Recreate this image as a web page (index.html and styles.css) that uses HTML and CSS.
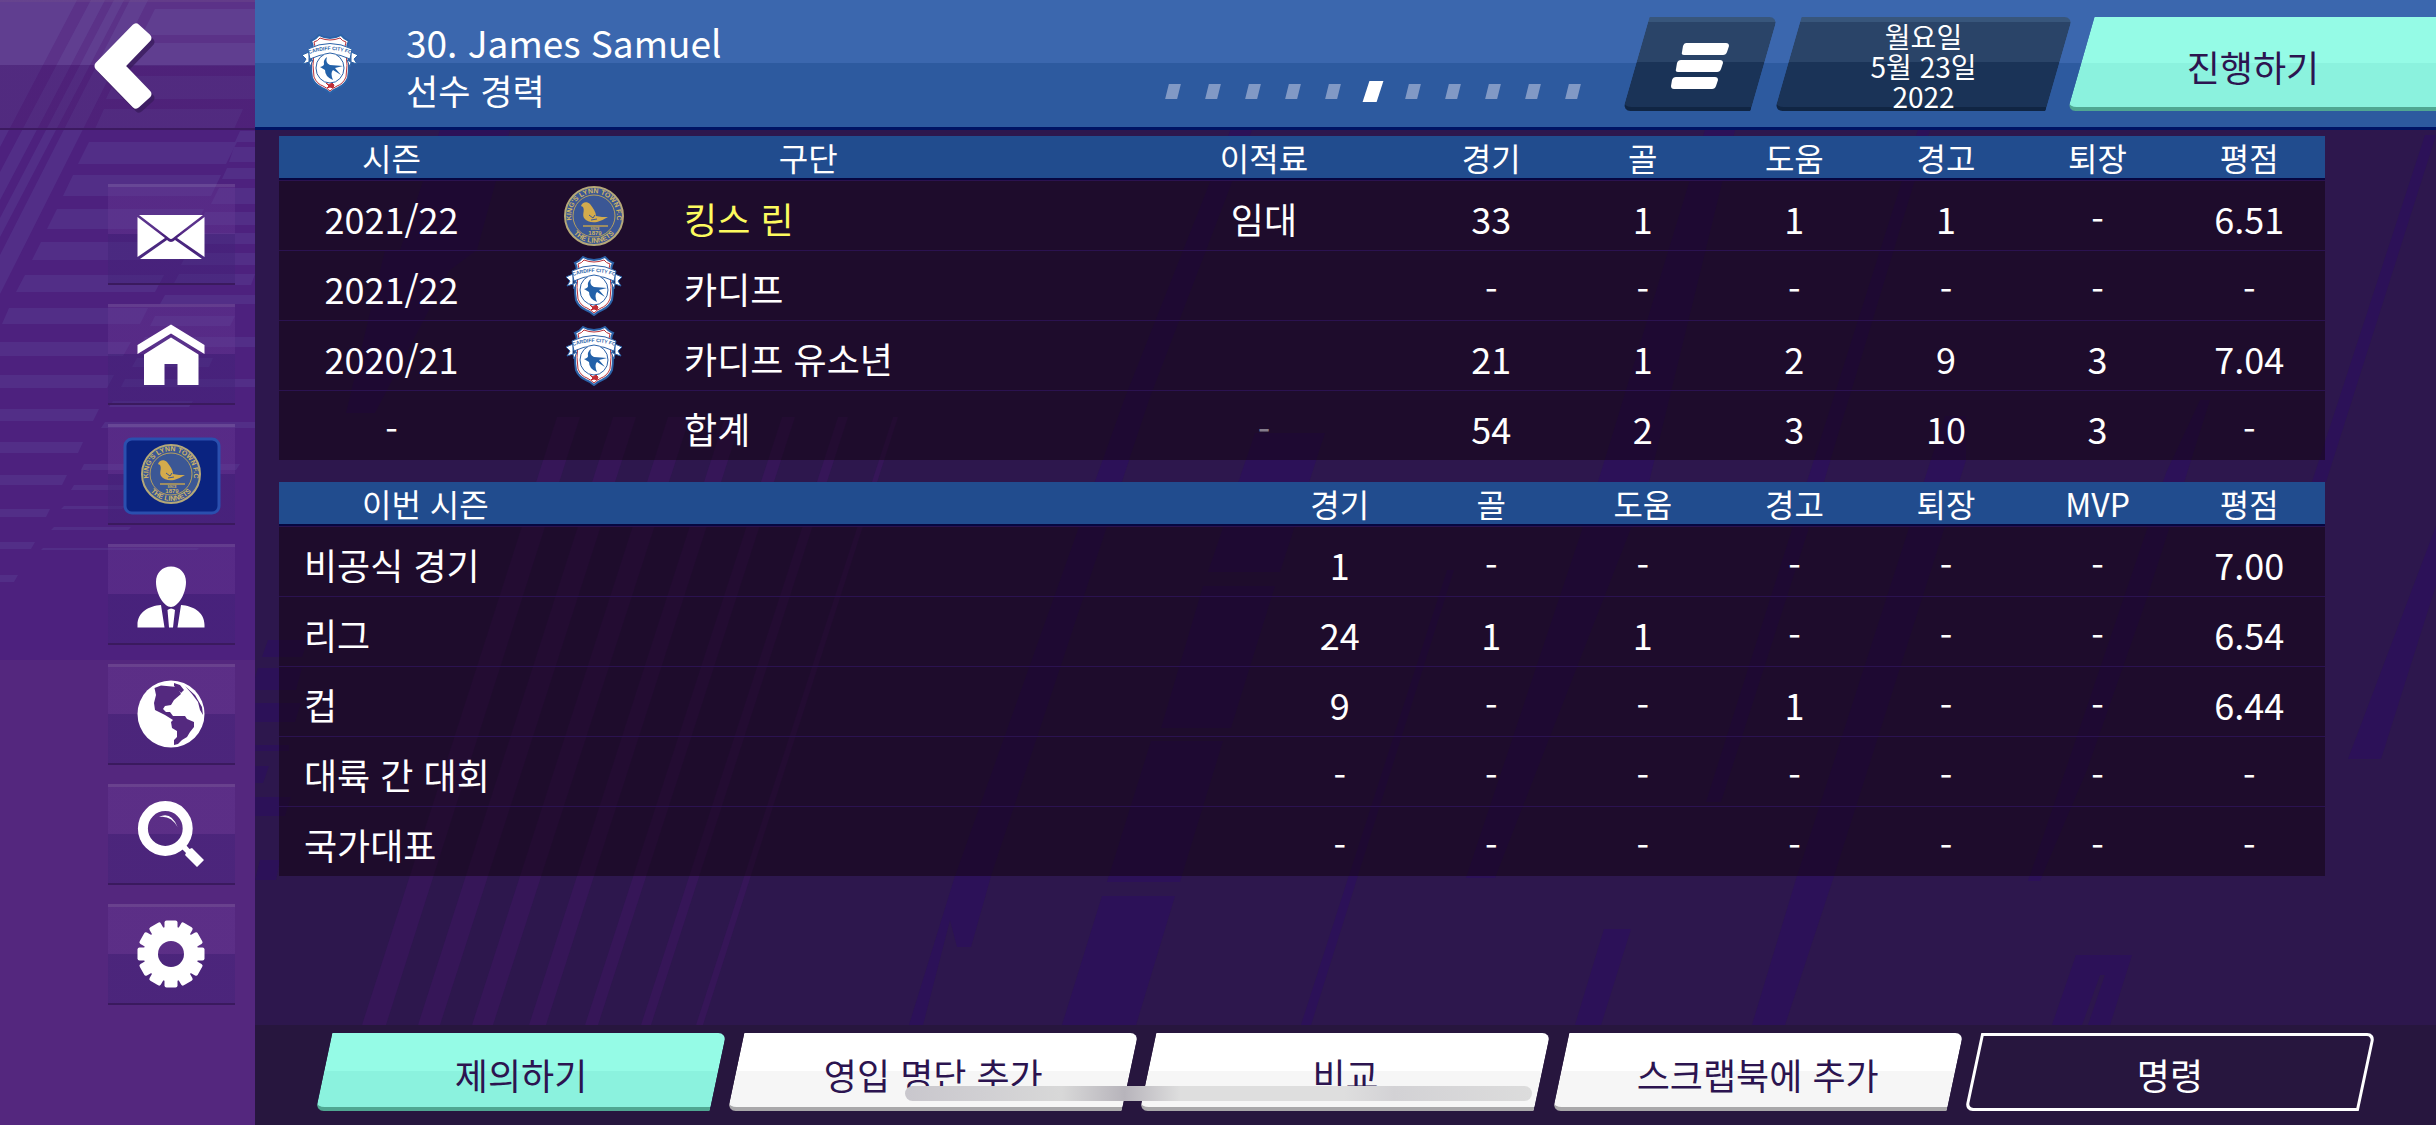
FILE: index.html
```html
<!DOCTYPE html>
<html lang="ko">
<head>
<meta charset="utf-8">
<meta name="viewport" content="width=device-width, initial-scale=1">
<title>30. James Samuel - 선수 경력</title>
<link rel="stylesheet" href="styles.css">
</head>
<body>
<svg class="sprites" aria-hidden="true">
  <defs>
    <mask id="gear-hole"><rect width="127" height="101" fill="#fff"/><circle cx="63" cy="50" r="13" fill="#000"/></mask>
    <path id="kl-top" d="M8 36A22.800 22.800 0 1 1 52 36"/>
    <path id="kl-bottom" d="M5 40A27 27 0 0 0 55 40"/>
    <path id="cc-arc" d="M9 20Q30 12 51 20"/>
    <symbol id="kings-lynn" viewBox="0 0 60 60">
      <circle cx="30" cy="30" r="29" fill="#3b5795" stroke="#b5a878" stroke-width="2"/>
      <circle cx="30" cy="30" r="21" fill="none" stroke="#b5a060" stroke-width="1"/>
      <path d="M17 20C18 16 23 15 26 18C29 22 32 26 32 30C36 31 40 31 44 31C40 33 37 35 33 36C28 37 23 36 20 32C18 28 21 25 19 21Z" fill="#d3ab4c"/>
      <path d="M25 29L29 32L31 29M27 34L33 33" stroke="#3b5795" stroke-width="1" fill="none"/>
      <path d="M19 40H44" stroke="#c0a052" stroke-width="1.5"/>
      <g fill="#cdb467" font-family="Liberation Sans, Arial, sans-serif" font-weight="700">
        <text font-size="7"><textPath href="#kl-top" startOffset="50%" text-anchor="middle">KING'S LYNN TOWN F.C</textPath></text>
        <text font-size="7"><textPath href="#kl-bottom" startOffset="50%" text-anchor="middle">THE LINNETS</textPath></text>
        <text x="31" y="44" font-size="3" text-anchor="middle">SINCE</text>
        <text x="31" y="49" font-size="6" text-anchor="middle">1879</text>
      </g>
    </symbol>
    <symbol id="cardiff" viewBox="0 0 60 60">
      <path d="M19 1Q24 4 30 4Q36 4 41 1Q44 5 49 7Q46 12 48 18Q50 32 48 44Q45 51 38 54Q33 56 30 59Q27 56 22 54Q15 51 12 44Q10 32 12 18Q14 12 11 7Q16 5 19 1Z" fill="#fff" stroke="#2b62a8" stroke-width="2"/>
      <path d="M20 4Q25 6 30 6Q35 6 40 4Q42 7 46 8Q44 12 46 18Q48 32 46 43Q43 50 37 52Q33 54 30 57Q27 54 23 52Q17 50 14 43Q12 32 14 18Q16 12 14 8Q18 7 20 4Z" fill="none" stroke="#b9343c" stroke-width="1"/>
      <path d="M2 21L9 18V28L13 26L10 33L9 28L3 30L6 25ZM58 21L51 18V28L47 26L50 33L51 28L57 30L54 25Z" fill="#fff" stroke="#2b62a8" stroke-width="1"/>
      <path d="M8 15Q30 4 52 15L50 25Q30 15 10 25Z" fill="#fff" stroke="#2b62a8" stroke-width="1"/>
      <text font-family="Liberation Sans, Arial, sans-serif" font-size="5" font-weight="700" fill="#2b62a8"><textPath href="#cc-arc" startOffset="50%" text-anchor="middle">CARDIFF CITY FC</textPath></text>
      <ellipse cx="30" cy="34" rx="14" ry="15" fill="#fff" stroke="#2b62a8" stroke-width="1"/>
      <path d="M27 23Q25 29 30 31L43 32L35 34L41 41L33 36Q30 39 33 46Q25 43 25 36L20 33Q24 32 24 30Q23 26 27 23Z" fill="#2361a9"/>
      <path d="M26 49L29 51L32 49L34 51L33 54L30 53L27 54L29 52Z" fill="#c02c34" stroke="#c02c34" stroke-width="1"/>
    </symbol>
  </defs>
</svg>

<svg class="backdrop" viewBox="0 0 2436 1125" preserveAspectRatio="xMinYMin slice" aria-hidden="true">
  <g fill="#361658">
    <path d="M362 1025h24L580 417h-23ZM418 1025h22L636 417h-23ZM472 1025h21L690 417h-22ZM529 1025h17L742 417h-17ZM585 1025h13L795 417h-13ZM641 1025h10L848 417h-10ZM696 1025h7L898 417h-5Z"/>
  </g>
  <g fill="#2c1158">
    <path d="M1062 1025h74L1175 896h-73ZM1107 882h73L1223 741h-72ZM1161 728h70L1275 586h-72ZM1208 572h72L1325 433h-70Z"/>
    <path d="M909 1025h14L950 920L957 947H971L991 876L1149 400L1290 30H1270L1124 400L955 876Z"/>
    <path d="M1301 1025h10L1454 570h-7Z"/>
    <path d="M1752 1025h33L1834 876L1966 460V416H1945L1797 876Z"/>
    <path d="M1575 1025h26L1631 929h-27Z"/>
    <path d="M2052 1025h30L2100 975H2105L2088 1025h22L2132 955h-56Z"/>
    <path d="M2348 759h33L2436 585V526Z"/>
    <path d="M1466 878h29L1649 482L1735 130H1705L1598 482Z"/>
    <path d="M1706 802h15L1825 478L1930 130H1918Z"/>
    <path d="M2028 881h12L2087 770L2145 604L2187 473L2210 400H2200L2166 473Z"/>
    <path d="M2312 482h14L2436 135H2425Z"/>
    <path d="M346 413h29L450 270L477 250L510 130H440L400 250H385Z"/>
    <path d="M268 640h40l-6 17H262ZM258 668h44l-6 22H255v-12ZM255 703h46l-6 19H255ZM255 745h34v6H255ZM255 766h14l-6 17H255ZM255 797h36l-6 19H255ZM260 860h20l-4 20H255Z"/>
  </g>
</svg>

<aside class="sidebar">
  <svg class="sidebar-art" viewBox="0 0 255 660" aria-hidden="true">
    <rect width="255" height="660" fill="#4d217e"/>
    <g fill="#54328a" opacity=".8">
      <path d="M0 0H77L0 147ZM91 0h14L0 200V172ZM114 0h10L0 237V218ZM130 0h18L0 294V255Z"/>
      <path d="M155 9H255V35H142ZM136 43H255V66H125ZM117 76H255V99H106ZM104 109H243L234 129H95Z"/>
      <path d="M89 142H237L226 164H78ZM73 175H221L211 196H63ZM57 209H204L194 229H47ZM41 242H188L179 260H32ZM25 275H164L155 292H16ZM9 308H148L140 324H2ZM0 342H131L123 356H0ZM0 375H114L107 388H0ZM0 409H99L93 421H0ZM0 442H83L78 453H0ZM0 475H67L62 485H0ZM0 509H50L46 517H0ZM0 542H35L31 549H0ZM0 575H18L14 582H0Z"/>
      <path d="M240 131H255V142H235ZM234 147H255V162H229ZM227 168H255V179H222ZM219 188H255V204H211ZM205 212H255V225H199ZM196 233H255V244H191ZM187 253H255V265H181ZM179 274H255L251 285H173ZM165 295H255V304H160ZM155 316H235L230 326H150ZM145 337h110V347H140ZM137 358H213L209 367H132ZM125 379H255V387H121ZM113 401H193L189 407H109ZM105 422H255V428H101ZM84 464H240L236 470H81ZM74 485H130L127 490H71ZM64 506H125L122 509H61ZM54 527H131L128 530H51ZM43 548H199L197 550H41Z"/>
    </g>
  </svg>
  <button class="back" aria-label="뒤로">
    <svg viewBox="0 0 255 127" aria-hidden="true">
      <path d="M99 64L136 26L147 36L120 64L147 92L136 102Z" fill="#3a1c5e" stroke="#3a1c5e" stroke-width="9" stroke-linejoin="round" transform="translate(3 4)" opacity=".8"/>
      <path d="M99 64L136 26L147 36L120 64L147 92L136 102Z" fill="#fff" stroke="#fff" stroke-width="9" stroke-linejoin="round"/>
    </svg>
  </button>
  <nav class="nav" aria-label="주 메뉴">
    <a class="tile" href="#inbox" aria-label="받은 편지함"><svg viewBox="0 0 127 101" fill="#fff"><path d="M31 31H95L65 54Q63 56 61 54ZM29.500 33L57 54L29.500 73ZM96.500 33V73L69 54ZM59 56Q63 60 67 56L94 75H32Z"/></svg></a>
    <a class="tile" href="#home" aria-label="홈"><svg viewBox="0 0 127 101" fill="#fff"><path d="M29.500 41L63 20.500L96.500 41V50L63 29.500L29.500 50ZM36 50.500L63 33.500L90.500 50.500V81H69.500V60H56.500V81H36Z"/></svg></a>
    <a class="tile" href="#club" aria-label="클럽"><svg viewBox="0 0 127 101"><rect x="17" y="15" width="94" height="74" rx="7" fill="#0a2380" stroke="#2a4fae" stroke-width="3"/><use href="#kings-lynn" x="33" y="20" width="60" height="60"/></svg></a>
    <a class="tile" href="#manager" aria-label="감독"><svg viewBox="0 0 127 101" fill="#fff"><path d="M63 22.500C54 22.500 48 29 48 38C48 50 56 63 63 63C70 63 78 50 78 38C78 29 72 22.500 63 22.500ZM29.500 83.500V81C29.500 68 41 62 53 61L56.500 83.500ZM96.500 83.500V81C96.500 68 85 62 73 61L69.500 83.500ZM59.500 66Q63 63 67 66L65 83.500H61Z"/></svg></a>
    <a class="tile" href="#world" aria-label="세계"><svg viewBox="0 0 127 101"><circle cx="63" cy="50" r="33.500" fill="#fff"/><path d="M46.500 24L53 21.500L69 23L73 30L66 36L63 41L57 42L55 45L58 48H62L65 52H77L79 55L86 58V63L82 68L79 73L74 76L70 80L66 81V76L69 73V67L64 64L63 58L65 56L57 51L47 46L46 39L48 31ZM66 19L72 21L76 26L73 29L69 24L66 22ZM77 22L87 31L94 43L95 51L92 46L90 38L84 30Z" fill="#54297f"/></svg></a>
    <a class="tile" href="#search" aria-label="검색"><svg viewBox="0 0 127 101" fill="#fff"><circle cx="57.300" cy="44.500" r="22.400" fill="none" stroke="#fff" stroke-width="10"/><path d="M51 33Q63 27 69.500 43Q63 31 51 33ZM74 65L78 61L81.500 65L84 64L96 76L89 83L77 71L78 69Z"/></svg></a>
    <a class="tile" href="#settings" aria-label="설정"><svg viewBox="0 0 127 101" fill="#fff"><g mask="url(#gear-hole)"><circle cx="63" cy="50" r="27.500"/><rect x="56.500" y="16.500" width="13" height="67" rx="2"/><rect x="56.500" y="16.500" width="13" height="67" rx="2" transform="rotate(30 63 50)"/><rect x="56.500" y="16.500" width="13" height="67" rx="2" transform="rotate(60 63 50)"/><rect x="56.500" y="16.500" width="13" height="67" rx="2" transform="rotate(90 63 50)"/><rect x="56.500" y="16.500" width="13" height="67" rx="2" transform="rotate(120 63 50)"/><rect x="56.500" y="16.500" width="13" height="67" rx="2" transform="rotate(150 63 50)"/></g></svg></a>
  </nav>
</aside>

<div class="page">
  <header class="topbar">
    <svg class="crest" role="img" aria-label="카디프"><use href="#cardiff"/></svg>
    <div class="titles">
      <h1>30. James Samuel</h1>
      <p>선수 경력</p>
    </div>
    <ol class="pager" aria-label="페이지">
      <li></li><li></li><li></li><li></li><li></li><li class="current" aria-current="page"></li><li></li><li></li><li></li><li></li><li></li>
    </ol>
    <button class="slab dark menu" aria-label="메뉴">
      <svg viewBox="0 0 58 46" fill="#fff" aria-hidden="true"><path d="M15 0H55Q58 0 58 3L56 9Q55 12 52 12H13Q10 12 11 9L12 3Q13 0 15 0ZM10 17H49Q52 17 52 20L50 26Q49 29 46 29H7Q4 29 5 26L6 20Q7 17 10 17ZM5 34H44Q47 34 47 37L45 43Q44 46 41 46H3Q0 46 0 43L1 37Q2 34 5 34Z"/></svg>
    </button>
    <button class="slab dark date"><span>월요일</span><span>5월 23일</span><span>2022</span></button>
    <button class="slab mint continue">진행하기</button>
  </header>

  <main class="content">
    <table class="stats career">
      <colgroup><col class="season"><col class="badge"><col class="club"><col class="fee"><col class="num"><col class="num"><col class="num"><col class="num"><col class="num"><col class="num"></colgroup>
      <thead><tr><th>시즌</th><th colspan="2">구단</th><th>이적료</th><th>경기</th><th>골</th><th>도움</th><th>경고</th><th>퇴장</th><th>평점</th></tr></thead>
      <tbody>
        <tr><td>2021/22</td><td class="badge-cell"><svg class="crest"><use href="#kings-lynn"/></svg></td><td class="label active">킹스 린</td><td>임대</td><td>33</td><td>1</td><td>1</td><td>1</td><td>-</td><td>6.51</td></tr>
        <tr><td>2021/22</td><td class="badge-cell"><svg class="crest"><use href="#cardiff"/></svg></td><td class="label">카디프</td><td></td><td>-</td><td>-</td><td>-</td><td>-</td><td>-</td><td>-</td></tr>
        <tr><td>2020/21</td><td class="badge-cell"><svg class="crest"><use href="#cardiff"/></svg></td><td class="label">카디프 유소년</td><td></td><td>21</td><td>1</td><td>2</td><td>9</td><td>3</td><td>7.04</td></tr>
        <tr><td>-</td><td></td><td class="label">합계</td><td class="muted">-</td><td>54</td><td>2</td><td>3</td><td>10</td><td>3</td><td>-</td></tr>
      </tbody>
    </table>

    <table class="stats current-season">
      <colgroup><col><col class="num"><col class="num"><col class="num"><col class="num"><col class="num"><col class="num"><col class="num"></colgroup>
      <thead><tr><th>이번 시즌</th><th>경기</th><th>골</th><th>도움</th><th>경고</th><th>퇴장</th><th>MVP</th><th>평점</th></tr></thead>
      <tbody>
        <tr><td class="label">비공식 경기</td><td>1</td><td>-</td><td>-</td><td>-</td><td>-</td><td>-</td><td>7.00</td></tr>
        <tr><td class="label">리그</td><td>24</td><td>1</td><td>1</td><td>-</td><td>-</td><td>-</td><td>6.54</td></tr>
        <tr><td class="label">컵</td><td>9</td><td>-</td><td>-</td><td>1</td><td>-</td><td>-</td><td>6.44</td></tr>
        <tr><td class="label">대륙 간 대회</td><td>-</td><td>-</td><td>-</td><td>-</td><td>-</td><td>-</td><td>-</td></tr>
        <tr><td class="label">국가대표</td><td>-</td><td>-</td><td>-</td><td>-</td><td>-</td><td>-</td><td>-</td></tr>
      </tbody>
    </table>
  </main>

  <footer class="actions">
    <button class="slab mint">제의하기</button>
    <button class="slab white">영입 명단 추가</button>
    <button class="slab white">비교</button>
    <button class="slab white">스크랩북에 추가</button>
    <button class="slab outline">명령</button>
  </footer>
</div>
<div class="home-indicator" aria-hidden="true"></div>
</body>
</html>
```
FILE: styles.css
```css
* {
  box-sizing: border-box;
}

body {
  margin: 0;
  min-height: 100vh;
  display: flex;
  position: relative;
  overflow-x: hidden;
  background: #2d174d;
  color: #fff;
  font-family: "Noto Sans CJK KR", "Noto Sans", sans-serif;
  font-size: 36px;
  line-height: 48px;
}

h1, p, ol {
  margin: 0;
  padding: 0;
  font-weight: 400;
  list-style: none;
}

button {
  border: 0;
  padding: 0;
  background: none;
  color: inherit;
  font: inherit;
  cursor: pointer;
}

.sprites {
  position: absolute;
  width: 0;
  height: 0;
}

.backdrop {
  position: absolute;
  inset: 0;
  width: 100%;
  height: 100%;
}

.crest {
  display: block;
  width: 60px;
  height: 60px;
}

/* Sidebar */

.sidebar {
  position: relative;
  flex: 0 0 255px;
  background: #54277e;
}

.sidebar-art {
  position: absolute;
  top: 0;
  left: 0;
  width: 100%;
}

.back {
  position: relative;
  display: block;
  width: 100%;
  height: 130px;
  border-top: 2px solid rgba(255, 255, 255, .12);
  border-bottom: 2px solid #3c1a60;
  background: linear-gradient(rgba(255, 255, 255, .08) 50%, rgba(80, 35, 110, .3) 50%);
}

.back svg {
  display: block;
  width: 100%;
}

.nav {
  position: relative;
  display: flex;
  flex-direction: column;
  gap: 19px;
  padding: 54px 20px 0 108px;
}

.tile {
  display: block;
  height: 101px;
  background: linear-gradient(rgba(255, 255, 255, .12) 3px, rgba(105, 60, 150, .35) 3px 51%, rgba(65, 35, 120, .45) 51%);
  border-bottom: 2px solid #3a1a5e;
}

.tile svg {
  display: block;
  width: 127px;
  height: 101px;
}

/* Page frame */

.page {
  position: relative;
  flex: 1;
  min-width: 0;
  display: flex;
  flex-direction: column;
}

.topbar {
  display: flex;
  align-items: center;
  height: 130px;
  padding-left: 45px;
  overflow: hidden;
  background: linear-gradient(#3b67ae 63px, #2d5a9f 63px);
  border-bottom: 3px solid #001464;
}

.titles {
  margin-left: 46px;
  padding-top: 4px;
}

.titles h1 {
  font-size: 37px;
}

.titles p {
  font-size: 35px;
}

.pager {
  display: flex;
  align-items: center;
  align-self: flex-end;
  height: 20px;
  margin: 0 32px 26px auto;
}

.pager li {
  width: 40px;
  display: flex;
  justify-content: center;
}

.pager li::before {
  content: "";
  width: 12px;
  height: 15px;
  background: #8199c5;
  transform: skewX(-14deg);
}

.pager .current::before {
  width: 14px;
  height: 21px;
  background: #fff;
  transform: skewX(-18deg);
}

/* Slanted buttons */

.slab {
  position: relative;
  z-index: 0;
  display: flex;
  align-items: center;
  justify-content: center;
  padding-top: 4px;
}

.slab::before {
  content: "";
  position: absolute;
  z-index: -1;
  inset: 0 7px;
  border-radius: 0 8px 0 8px;
  transform: skewX(-12deg);
}

.topbar .slab {
  height: 94px;
}

.topbar .slab::before {
  inset: 0 11px;
  transform: skewX(-16deg);
}

.menu {
  width: 150px;
  margin-right: 2px;
}

.menu svg {
  width: 58px;
  height: 46px;
}

.date {
  width: 293px;
  flex-direction: column;
  font-size: 28px;
  line-height: 30px;
}

.continue {
  width: 366px;
}

.topbar .continue::before {
  right: -20px;
}

.dark::before {
  background: linear-gradient(#38567b 5px, #2a4468 5px 50%, #1a3357 50%);
  border-bottom: 4px solid #102543;
}

.mint,
.white {
  color: #2c1450;
}

.mint::before {
  background: linear-gradient(#95fbe6 51%, #8bf2de 51%);
  border-bottom: 4px solid #50a792;
}

.white::before {
  background: linear-gradient(#fff 51%, #f6f6f6 51%);
  border-bottom: 4px solid #a9a8aa;
}

.outline::before {
  border: 3px solid #fff;
}

/* Tables */

.content {
  flex: 1;
  display: flex;
  flex-direction: column;
  gap: 22px;
  padding: 6px 111px 22px 24px;
}

.stats {
  width: 100%;
  table-layout: fixed;
  border-collapse: separate;
  border-spacing: 0;
  background: rgba(16, 2, 12, .5);
}

.stats th {
  height: 44px;
  padding: 0;
  background: #214c8e;
  border-bottom: 2px solid #060640;
  font-size: 32px;
  font-weight: 400;
  line-height: 40px;
}

.stats td {
  height: 70px;
  padding: 4px 0 0;
  border-top: 1px solid #2b1250;
  text-align: center;
}

.stats .badge-cell {
  padding: 0;
}

.badge-cell .crest {
  margin: 0 auto;
}

.stats .label {
  text-align: left;
}

.stats .active {
  color: #fdfb5f;
}

.stats .muted {
  color: #857d8c;
}

.season { width: 11%; }
.badge { width: 8.8%; }
.club { width: 20.94%; }
.fee { width: 14.8%; }
.num { width: 7.41%; }

.current-season th:first-child {
  padding-left: 83px;
  text-align: left;
}

.current-season .label {
  padding-left: 25px;
}

/* Bottom actions */

.actions {
  display: flex;
  gap: 4px;
  height: 100px;
  padding: 8px 62px 14px;
  background: #27163e;
}

.actions .slab {
  flex: 1;
}

.home-indicator {
  position: fixed;
  bottom: 24px;
  left: 50%;
  width: 627px;
  height: 15px;
  margin-left: -313px;
  border-radius: 8px;
  background: linear-gradient(90deg, #c9c7cd, #d8d8d8 25%, #b7b4bb 35%, #dedede 44%, #dedede 70%, #d3d2d5 78%, #dcdcdc);
}
```
